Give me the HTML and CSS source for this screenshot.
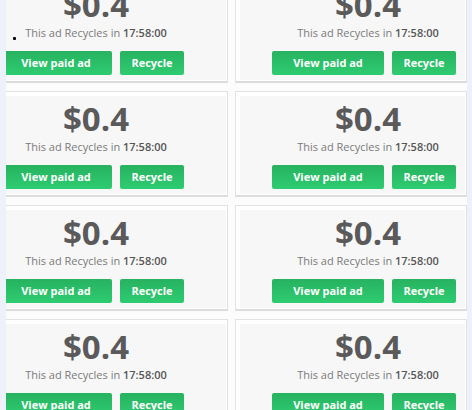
FILE: index.html
```html
<!DOCTYPE html>
<html>
<head>
<meta charset="utf-8">
<link rel="stylesheet" href="styles.css">
</head>
<body>
<div class="viewport">
  <div class="grid">
    <div class="card col-a"><div class="panel"><div class="block">
      <div class="price">$0.4</div>
      <div class="note">This ad Recycles in <b>17:58:00</b></div>
      <div class="actions"><a class="btn btn-view">View paid ad</a><a class="btn btn-rec">Recycle</a></div>
    </div></div></div>
    <div class="card col-b"><div class="panel"><div class="block">
      <div class="price">$0.4</div>
      <div class="note">This ad Recycles in <b>17:58:00</b></div>
      <div class="actions"><a class="btn btn-view">View paid ad</a><a class="btn btn-rec">Recycle</a></div>
    </div></div></div>
    <div class="card col-a"><div class="panel"><div class="block">
      <div class="price">$0.4</div>
      <div class="note">This ad Recycles in <b>17:58:00</b></div>
      <div class="actions"><a class="btn btn-view">View paid ad</a><a class="btn btn-rec">Recycle</a></div>
    </div></div></div>
    <div class="card col-b"><div class="panel"><div class="block">
      <div class="price">$0.4</div>
      <div class="note">This ad Recycles in <b>17:58:00</b></div>
      <div class="actions"><a class="btn btn-view">View paid ad</a><a class="btn btn-rec">Recycle</a></div>
    </div></div></div>
    <div class="card col-a"><div class="panel"><div class="block">
      <div class="price">$0.4</div>
      <div class="note">This ad Recycles in <b>17:58:00</b></div>
      <div class="actions"><a class="btn btn-view">View paid ad</a><a class="btn btn-rec">Recycle</a></div>
    </div></div></div>
    <div class="card col-b"><div class="panel"><div class="block">
      <div class="price">$0.4</div>
      <div class="note">This ad Recycles in <b>17:58:00</b></div>
      <div class="actions"><a class="btn btn-view">View paid ad</a><a class="btn btn-rec">Recycle</a></div>
    </div></div></div>
    <div class="card col-a"><div class="panel"><div class="block">
      <div class="price">$0.4</div>
      <div class="note">This ad Recycles in <b>17:58:00</b></div>
      <div class="actions"><a class="btn btn-view">View paid ad</a><a class="btn btn-rec">Recycle</a></div>
    </div></div></div>
    <div class="card col-b"><div class="panel"><div class="block">
      <div class="price">$0.4</div>
      <div class="note">This ad Recycles in <b>17:58:00</b></div>
      <div class="actions"><a class="btn btn-view">View paid ad</a><a class="btn btn-rec">Recycle</a></div>
    </div></div></div>
  </div>
</div>
<div class="cursor"></div>
</body>
</html>
```
FILE: styles.css
```css
html, body {
  margin: 0;
  padding: 0;
  height: 410px;
  overflow: hidden;
  background: #edf1fa;
  font-family: "Open Sans", "DejaVu Sans", sans-serif;
}
.viewport {
  margin-left: 6px;
  width: 461px;
  height: 410px;
  overflow: hidden;
  background: #fcfcfc;
}
.grid {
  display: grid;
  grid-template-columns: 232px 232px;
  column-gap: 7px;
  row-gap: 8px;
  margin-left: -10px;
  margin-top: -23px;
}
.card {
  background: #ffffff;
  border: 1px solid #e2e2e2;
  border-bottom: 2px solid #dcdcdc;
  padding: 4px 1px 1px 4px;
  box-sizing: border-box;
  height: 106px;
}
.panel {
  background: #f7f7f7;
  height: 98px;
  padding-top: 5px;
  box-sizing: border-box;
}
.block {
  width: 192px;
  text-align: center;
}
.col-a .block { margin-left: -1px; }
.col-b .block { margin-left: 32px; }
.price {
  font-size: 33px;
  font-weight: 700;
  line-height: 36px;
  color: #5a5a5a;
}
.note {
  margin-top: 2px;
  font-size: 11px;
  line-height: 16px;
  color: #7a7a7a;
  white-space: nowrap;
}
.note b {
  font-weight: 600;
  color: #555;
}
.actions {
  margin-top: 10px;
  display: flex;
  gap: 8px;
}
.btn {
  display: block;
  height: 24px;
  line-height: 24px;
  border-radius: 2px;
  background: linear-gradient(#27b260, #2ecc71);
  color: #fff;
  font-size: 11px;
  font-weight: 700;
  text-align: center;
}
.btn-view { width: 112px; }
.btn-rec { width: 64px; }
.cursor {
  position: absolute;
  left: 13px;
  top: 37px;
  width: 3px;
  height: 3px;
  background: #000;
  border-radius: 1px;
}
```
